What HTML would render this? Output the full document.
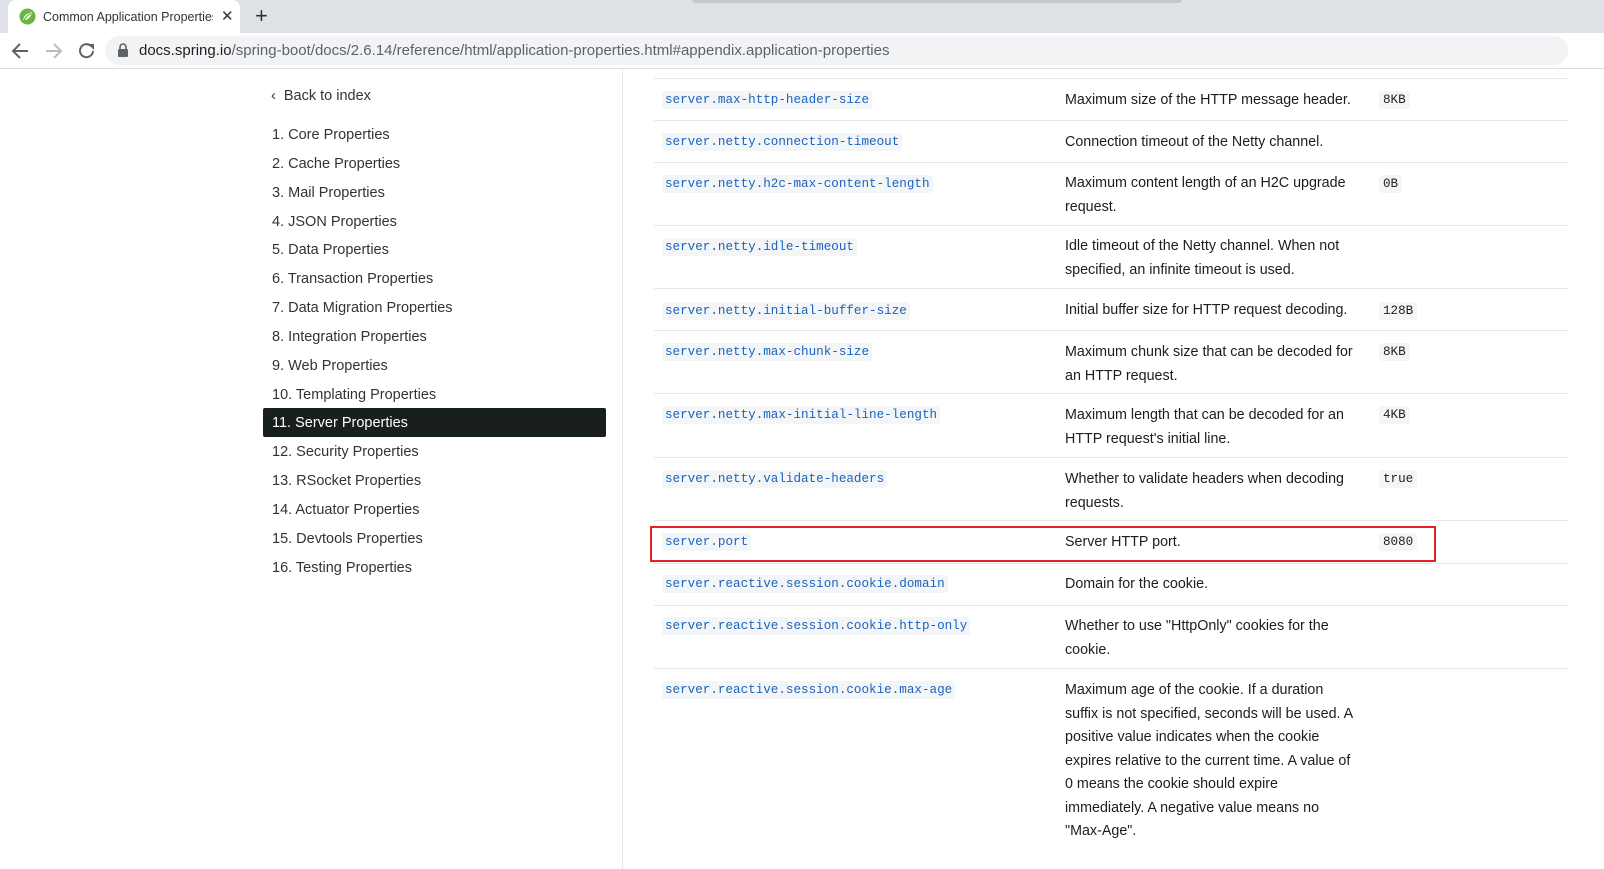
<!DOCTYPE html>
<html><head><meta charset="utf-8"><style>
*{margin:0;padding:0;box-sizing:border-box}
body{width:1604px;height:869px;overflow:hidden;background:#fff;font-family:"Liberation Sans",sans-serif;position:relative;color:#191e1e}
.abs{position:absolute}
.tabbar{left:0;top:0;width:1604px;height:33px;background:#dee1e6}
.tab{left:8px;top:0;width:232px;height:33px;background:#fff;border-radius:8px 8px 0 0;font-size:12.5px;color:#333}
.addr{left:0;top:33px;width:1604px;height:36px;background:#fff;border-bottom:1px solid #dadce0}
.pill{left:105px;top:36px;width:1463px;height:29px;background:#f1f3f4;border-radius:15px}
.url{left:139px;top:42px;font-size:15px;color:#5f6368;white-space:nowrap}
.url b{font-weight:normal;color:#202124}
.side{font-size:14.5px;color:#333;white-space:nowrap}
.vline{left:622px;top:69px;width:1px;height:800px;background:#e8e8e8}
.hl{left:263px;top:408px;width:343px;height:29px;background:#191e1e;border-radius:2px}
.hr{left:654px;width:914px;height:1px;background:#e8e8e8}
code{font-family:"Liberation Mono",monospace;font-size:12.6px}
.c{left:662px;background:#f3f5f6;color:#1a63c0;padding:2px 3px;border-radius:3px;white-space:nowrap}
.d{left:1065px;width:295px;font-size:14.3px;line-height:23.5px;color:#191e1e}
.v{left:1379px;background:#f3f5f6;color:#222;padding:2px 4px;border-radius:3px}
</style></head><body>
<div class="abs tabbar"></div>
<div class="abs" style="left:692px;top:0;width:490px;height:3px;background:#c8c8c8;border-radius:0 0 4px 4px"></div>
<div class="abs tab"></div>
<svg class="abs" style="left:19px;top:8px" width="17" height="17" viewBox="0 0 17 17"><circle cx="8.5" cy="8.5" r="8" fill="#6db33f"/><path d="M4 12c1-5 5-7 9-8-1 4-3 8-8 8" fill="#fff"/><path d="M5 12c2-3 4-5 7-7" stroke="#6db33f" stroke-width="1.2" fill="none"/></svg>
<div class="abs" style="left:43px;top:10px;font-size:12.5px;color:#333;white-space:nowrap;width:170px;overflow:hidden">Common Application Properties</div>
<div class="abs" style="left:221px;top:7px;font-size:15px;color:#333">✕</div>
<div class="abs" style="left:255px;top:3px;font-size:22px;color:#333">+</div>
<div class="abs addr"></div>
<svg class="abs" style="left:10px;top:41px" width="90" height="20" viewBox="0 0 90 20"><path d="M18 10H4M10 3L3 10l7 7" stroke="#5f6368" stroke-width="2" fill="none"/><path d="M36 10h14M44 3l7 7-7 7" stroke="#b9bcc0" stroke-width="2" fill="none"/><path d="M81 5a6.5 6.5 0 1 0 2 5" stroke="#5f6368" stroke-width="2" fill="none"/><path d="M78 3h6v6z" fill="#5f6368"/></svg>
<div class="abs pill"></div>
<svg class="abs" style="left:117px;top:43px" width="12" height="14" viewBox="0 0 12 14"><rect x="1" y="6" width="10" height="8" rx="1" fill="#5f6368"/><path d="M3 6V4a3 3 0 0 1 6 0v2" stroke="#5f6368" stroke-width="1.6" fill="none"/></svg>
<div class="abs url"><b>docs.spring.io</b>/spring-boot/docs/2.6.14/reference/html/application-properties.html#appendix.application-properties</div>

<div class="abs vline"></div>
<div class="abs side" style="left:271px;top:88px">‹&nbsp; Back to index</div>
<div class="abs hl"></div>
<div class="abs side" style="left:272px;top:121px;line-height:28.85px">
1. Core Properties<br>2. Cache Properties<br>3. Mail Properties<br>4. JSON Properties<br>5. Data Properties<br>6. Transaction Properties<br>7. Data Migration Properties<br>8. Integration Properties<br>9. Web Properties<br>10. Templating Properties<br><span style="color:#fff">11. Server Properties</span><br>12. Security Properties<br>13. RSocket Properties<br>14. Actuator Properties<br>15. Devtools Properties<br>16. Testing Properties</div>

<div class="abs hr" style="top:78px"></div>
<div class="abs hr" style="top:120px"></div>
<div class="abs hr" style="top:162px"></div>
<div class="abs hr" style="top:225px"></div>
<div class="abs hr" style="top:288px"></div>
<div class="abs hr" style="top:330px"></div>
<div class="abs hr" style="top:393px"></div>
<div class="abs hr" style="top:457px"></div>
<div class="abs hr" style="top:520px"></div>
<div class="abs hr" style="top:563px"></div>
<div class="abs hr" style="top:605px"></div>
<div class="abs hr" style="top:668px"></div>

<code class="abs c" style="top:91px">server.max-http-header-size</code>
<div class="abs d" style="top:89px;width:310px">Maximum size of the HTTP message header.</div>
<code class="abs v" style="top:91px">8KB</code>

<code class="abs c" style="top:133px">server.netty.connection-timeout</code>
<div class="abs d" style="top:131px;width:310px">Connection timeout of the Netty channel.</div>

<code class="abs c" style="top:175px">server.netty.h2c-max-content-length</code>
<div class="abs d" style="top:172px">Maximum content length of an H2C upgrade request.</div>
<code class="abs v" style="top:175px">0B</code>

<code class="abs c" style="top:238px">server.netty.idle-timeout</code>
<div class="abs d" style="top:235px">Idle timeout of the Netty channel. When not specified, an infinite timeout is used.</div>

<code class="abs c" style="top:302px">server.netty.initial-buffer-size</code>
<div class="abs d" style="top:299px;width:310px">Initial buffer size for HTTP request decoding.</div>
<code class="abs v" style="top:302px">128B</code>

<code class="abs c" style="top:343px">server.netty.max-chunk-size</code>
<div class="abs d" style="top:341px">Maximum chunk size that can be decoded for an HTTP request.</div>
<code class="abs v" style="top:343px">8KB</code>

<code class="abs c" style="top:406px">server.netty.max-initial-line-length</code>
<div class="abs d" style="top:404px">Maximum length that can be decoded for an HTTP request's initial line.</div>
<code class="abs v" style="top:406px">4KB</code>

<code class="abs c" style="top:470px">server.netty.validate-headers</code>
<div class="abs d" style="top:468px">Whether to validate headers when decoding requests.</div>
<code class="abs v" style="top:470px">true</code>

<div class="abs" style="left:650px;top:526px;width:786px;height:36px;border:2px solid #e5202a"></div>
<code class="abs c" style="top:533px">server.port</code>
<div class="abs d" style="top:531px">Server HTTP port.</div>
<code class="abs v" style="top:533px">8080</code>

<code class="abs c" style="top:575px">server.reactive.session.cookie.domain</code>
<div class="abs d" style="top:573px">Domain for the cookie.</div>

<code class="abs c" style="top:617px">server.reactive.session.cookie.http-only</code>
<div class="abs d" style="top:615px">Whether to use "HttpOnly" cookies for the cookie.</div>

<code class="abs c" style="top:681px">server.reactive.session.cookie.max-age</code>
<div class="abs d" style="top:679px;white-space:nowrap;width:auto">Maximum age of the cookie. If a duration<br>suffix is not specified, seconds will be used. A<br>positive value indicates when the cookie<br>expires relative to the current time. A value of<br>0 means the cookie should expire<br>immediately. A negative value means no<br>"Max-Age".</div>
</body></html>
